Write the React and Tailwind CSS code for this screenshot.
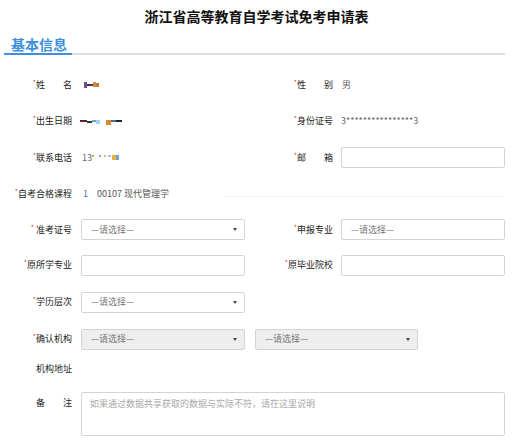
import React from "react";

const Star = () => <span className="text-[#e4393c] text-[7px] align-top leading-none">*</span>;

function Label({ children, star = true, w = "w-[72px]" }) {
  return (
    <div className={`${w} shrink-0 text-right text-[9px] text-[#222] leading-[12px] whitespace-pre`}>
      {star && <Star />}
      {children}
    </div>
  );
}

function Select({ gray = false, arrow = true, w = "w-[164px]" }) {
  return (
    <div
      className={`${w} h-[21px] shrink-0 border border-[#d4d4d4] rounded-[2px] flex items-center pl-[9px] pr-[6px] text-[9px] text-[#777] ${
        gray ? "bg-[#eeeeee]" : "bg-white"
      }`}
    >
      <span className="flex-1">—请选择—</span>
      {arrow && (
        <svg width="4" height="3" viewBox="0 0 4 3" className="mr-[1px]">
          <path d="M0 0H4L2 3Z" fill="#444" />
        </svg>
      )}
    </div>
  );
}

function Input() {
  return <div className="w-[164px] h-[21px] shrink-0 border border-[#d4d4d4] rounded-[2px] bg-white" />;
}

export default function App() {
  return (
    <div
      className="w-[513px] h-[443px] bg-white overflow-hidden"
      style={{ fontFamily: '"Noto Sans CJK SC", "Liberation Sans", sans-serif' }}
    >
      <div className="h-[32px] flex items-center justify-center text-[14px] font-bold text-[#111]">
        浙江省高等教育自学考试免考申请表
      </div>
      <div className="mx-[4px] w-[501px] border-b-2 border-[#dedede] flex pt-[3px]">
        <div className="w-[68px] pl-[7px] text-[14px] font-bold text-[#3d8fe0] leading-[18px] border-b-2 border-[#3d8fe0] -mb-[2px]">
          基本信息
        </div>
      </div>

      <div className="mt-[11px]">
        {/* row 1 */}
        <div className="h-[37px] grid grid-cols-[260px_253px] items-center">
          <div className="flex items-center">
            <Label>{"姓\u3000\u3000名"}</Label>
            <div className="ml-[12px] flex items-center h-[6px]">
              <span className="w-[3px] h-[6px] bg-[#6a4f8a]" />
              <span className="w-[6px] h-[2px] bg-[#4c2f5c]" />
              <span className="w-[3px] h-[5px] bg-[#d08a48]" />
              <span className="w-[3px] h-[4px] bg-[#c97a3a]" />
            </div>
          </div>
          <div className="flex items-center">
            <Label w="w-[73px]">{"性\u3000\u3000别"}</Label>
            <span className="ml-[9px] text-[9px] text-[#666]">男</span>
          </div>
        </div>
        {/* row 2 */}
        <div className="h-[36px] grid grid-cols-[260px_253px] items-center">
          <div className="flex items-center">
            <Label>出生日期</Label>
            <div className="ml-[8px] flex items-center gap-[0px]">
              <span className="w-[7px] h-[2px] bg-[#5a2a2a]" />
              <span className="w-[5px] h-[2px] bg-[#333] mt-[2px]" />
              <span className="w-[4px] h-[2px] bg-[#6aa0d8]" />
              <span className="w-[4px] h-[4px] bg-[#9fd0f5] mt-[2px]" />
              <span className="w-[5px] h-[5px] bg-[#d58a2e] ml-[6px] mt-[2px]" />
              <span className="w-[5px] h-[2px] bg-[#4a6fa5]" />
              <span className="w-[6px] h-[2px] bg-[#222]" />
            </div>
          </div>
          <div className="flex items-center">
            <Label w="w-[73px]">身份证号</Label>
            <span className="ml-[8px] text-[9px] text-[#666]">3****************3</span>
          </div>
        </div>
        {/* row 3 */}
        <div className="h-[37px] grid grid-cols-[260px_253px] items-center">
          <div className="flex items-center">
            <Label>联系电话</Label>
            <div className="ml-[10px] flex items-center text-[9px] text-[#666]">
              13
              <span className="w-[2px] h-[2px] bg-[#e0a040] mb-[4px]" />
              <span className="w-[2px] h-[2px] bg-[#7ab0e8] ml-[5px] mb-[3px]" />
              <span className="w-[2px] h-[2px] bg-[#f0b070] ml-[3px] mb-[3px]" />
              <span className="w-[3px] h-[2px] bg-[#9bc4ee] ml-[2px] mb-[3px]" />
              <span className="w-[4px] h-[5px] bg-[#e8b040] ml-[1px]" />
              <span className="w-[3px] h-[5px] bg-[#7aa0d8]" />
            </div>
          </div>
          <div className="flex items-center">
            <Label w="w-[73px]">{"邮\u3000\u3000箱"}</Label>
            <div className="ml-[8px]"><Input /></div>
          </div>
        </div>
        {/* row 4 */}
        <div className="h-[36px] flex items-center relative">
          <Label>自考合格课程</Label>
          <span className="ml-[11px] text-[9px] text-[#3d6fd0]">1</span>
          <span className="ml-[9px] text-[9px] text-[#555]">00107 现代管理学</span>
          <div className="absolute left-[223px] right-[8px] top-[20px] border-b border-[#f2f2f2]" />
        </div>
        {/* row 5 */}
        <div className="h-[35px] grid grid-cols-[260px_253px] items-center">
          <div className="flex items-center">
            <Label>{" 准考证号"}</Label>
            <div className="ml-[9px]"><Select /></div>
          </div>
          <div className="flex items-center">
            <Label w="w-[73px]">申报专业</Label>
            <div className="ml-[8px]"><Select arrow={false} /></div>
          </div>
        </div>
        {/* row 6 */}
        <div className="h-[36px] grid grid-cols-[260px_253px] items-center">
          <div className="flex items-center">
            <Label>原所学专业</Label>
            <div className="ml-[9px]"><Input /></div>
          </div>
          <div className="flex items-center">
            <Label w="w-[73px]">原毕业院校</Label>
            <div className="ml-[8px]"><Input /></div>
          </div>
        </div>
        {/* row 7 */}
        <div className="h-[38px] flex items-center">
          <Label>学历层次</Label>
          <div className="ml-[9px]"><Select /></div>
        </div>
        {/* row 8 */}
        <div className="h-[36px] flex items-center">
          <Label>确认机构</Label>
          <div className="ml-[9px]"><Select gray /></div>
          <div className="ml-[10px]"><Select gray w="w-[163px]" /></div>
        </div>
        {/* row 9 */}
        <div className="h-[24px] flex items-center">
          <Label star={false}>机构地址</Label>
        </div>
        {/* row 10 */}
        <div className="mt-[11px] flex items-start">
          <div className="pt-[5px]">
            <Label star={false}>{"备\u3000\u3000注"}</Label>
          </div>
          <div className="ml-[9px] w-[424px] h-[44px] border border-[#d4d4d4] rounded-[2px] px-[8px] pt-[4px] text-[9px] text-[#aaa]">
            如果通过数据共享获取的数据与实际不符，请在这里说明
          </div>
        </div>
      </div>
    </div>
  );
}
